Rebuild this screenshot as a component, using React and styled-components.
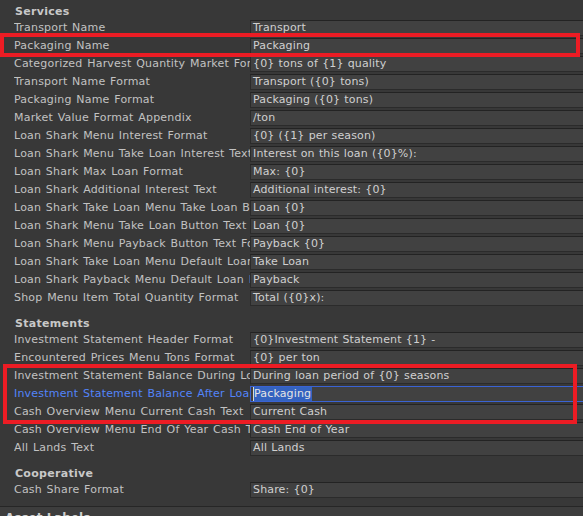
import React from "react";
import styled, { createGlobalStyle } from "styled-components";

const Global = createGlobalStyle`
  html, body { margin: 0; padding: 0; background: #383838; overflow: hidden; }
  body { font-family: "DejaVu Sans", "Liberation Sans", sans-serif; }
`;

const Page = styled.div`
  position: relative;
  width: 583px;
  height: 516px;
  overflow: hidden;
  background: #383838;
  display: flex;
  flex-direction: column;
  padding-top: 1px;
  box-sizing: border-box;
`;

const SectionHeader = styled.div`
  height: 18px;
  padding: 3px 0 0 15px;
  box-sizing: border-box;
  font-size: 11px;
  font-weight: bold;
  color: #c8c8c8;
  line-height: 15px;
  letter-spacing: 0.3px;
  flex: none;
`;

const Spacer = styled.div`
  height: ${(p) => p.$h}px;
  flex: none;
`;

const Row = styled.div`
  height: 18px;
  display: flex;
  align-items: center;
  padding-left: 14px;
  flex: none;
`;

const Label = styled.div`
  width: 236px;
  flex: none;
  overflow: hidden;
  white-space: nowrap;
  font-size: 11px;
  letter-spacing: 0.2px;
  word-spacing: 1px;
  color: ${(p) => (p.$active ? "#5384fa" : "#c2c2c2")};
  line-height: 16px;
`;

const Field = styled.div`
  flex: 1;
  height: 16px;
  margin-right: -6px;
  box-sizing: border-box;
  background: #414141;
  border: 1px solid ${(p) => (p.$active ? "#3a63d4" : "#2b2b2b")};
  border-top-color: ${(p) => (p.$active ? "#3a63d4" : "#232323")};
  padding-left: 2px;
  font-size: 11px;
  letter-spacing: 0.15px;
  word-spacing: 0.5px;
  color: #d0d0d0;
  line-height: 14px;
  white-space: nowrap;
  overflow: hidden;
  display: flex;
  align-items: stretch;
`;

const Selection = styled.span`
  background: #3463c0;
  color: #e4e4e4;
  padding: 0 1px 0 0;
  border-left: 1px solid #d8d8d8;
`;

const FooterBar = styled.div`
  margin-top: 7px;
  flex: 1;
  background: #3d3d3d;
  border-top: 1px solid #262626;
  padding: 4px 0 0 5px;
  font-size: 12px;
  font-weight: bold;
  color: #cfcfcf;
  line-height: 14px;
`;

const Highlight = styled.div`
  position: absolute;
  left: ${(p) => p.$x}px;
  top: ${(p) => p.$y}px;
  width: ${(p) => p.$w}px;
  height: ${(p) => p.$h}px;
  box-sizing: border-box;
  border: 4px solid #ec1c24;
  pointer-events: none;
`;

const services = [
  ["Transport Name", "Transport"],
  ["Packaging Name", "Packaging"],
  ["Categorized Harvest Quantity Market Format", "{0} tons of {1} quality"],
  ["Transport Name Format", "Transport ({0} tons)"],
  ["Packaging Name Format", "Packaging ({0} tons)"],
  ["Market Value Format Appendix", "/ton"],
  ["Loan Shark Menu Interest Format", "{0} ({1} per season)"],
  ["Loan Shark Menu Take Loan Interest Text", "Interest on this loan ({0}%):"],
  ["Loan Shark Max Loan Format", "Max: {0}"],
  ["Loan Shark Additional Interest Text", "Additional interest: {0}"],
  ["Loan Shark Take Loan Menu Take Loan Button", "Loan {0}"],
  ["Loan Shark Menu Take Loan Button Text", "Loan {0}"],
  ["Loan Shark Menu Payback Button Text Format", "Payback {0}"],
  ["Loan Shark Take Loan Menu Default Loan", "Take Loan"],
  ["Loan Shark Payback Menu Default Loan Button", "Payback"],
  ["Shop Menu Item Total Quantity Format", "Total ({0}x):"],
];

const statements = [
  ["Investment Statement Header Format", "{0}Investment Statement {1} -"],
  ["Encountered Prices Menu Tons Format", "{0} per ton"],
  ["Investment Statement Balance During Loan", "During loan period of {0} seasons"],
  ["Investment Statement Balance After Loan", "Packaging", true],
  ["Cash Overview Menu Current Cash Text", "Current Cash"],
  ["Cash Overview Menu End Of Year Cash Text", "Cash End of Year"],
  ["All Lands Text", "All Lands"],
];

const cooperative = [["Cash Share Format", "Share: {0}"]];

function PropRow({ label, value, active }) {
  return (
    <Row>
      <Label $active={active}>{label}</Label>
      <Field $active={active}>
        {active ? <Selection>{value}</Selection> : value}
      </Field>
    </Row>
  );
}

export default function App() {
  return (
    <Page>
      <Global />
      <SectionHeader>Services</SectionHeader>
      {services.map(([l, v]) => (
        <PropRow key={l} label={l} value={v} />
      ))}
      <Spacer $h={6} />
      <SectionHeader>Statements</SectionHeader>
      {statements.map(([l, v, a]) => (
        <PropRow key={l} label={l} value={v} active={a} />
      ))}
      <Spacer $h={6} />
      <SectionHeader>Cooperative</SectionHeader>
      {cooperative.map(([l, v]) => (
        <PropRow key={l} label={l} value={v} />
      ))}
      <FooterBar>Asset Labels</FooterBar>
      <Highlight $x={0} $y={33} $w={580} $h={24} />
      <Highlight $x={3} $y={364} $w={574} $h={60} />
    </Page>
  );
}
